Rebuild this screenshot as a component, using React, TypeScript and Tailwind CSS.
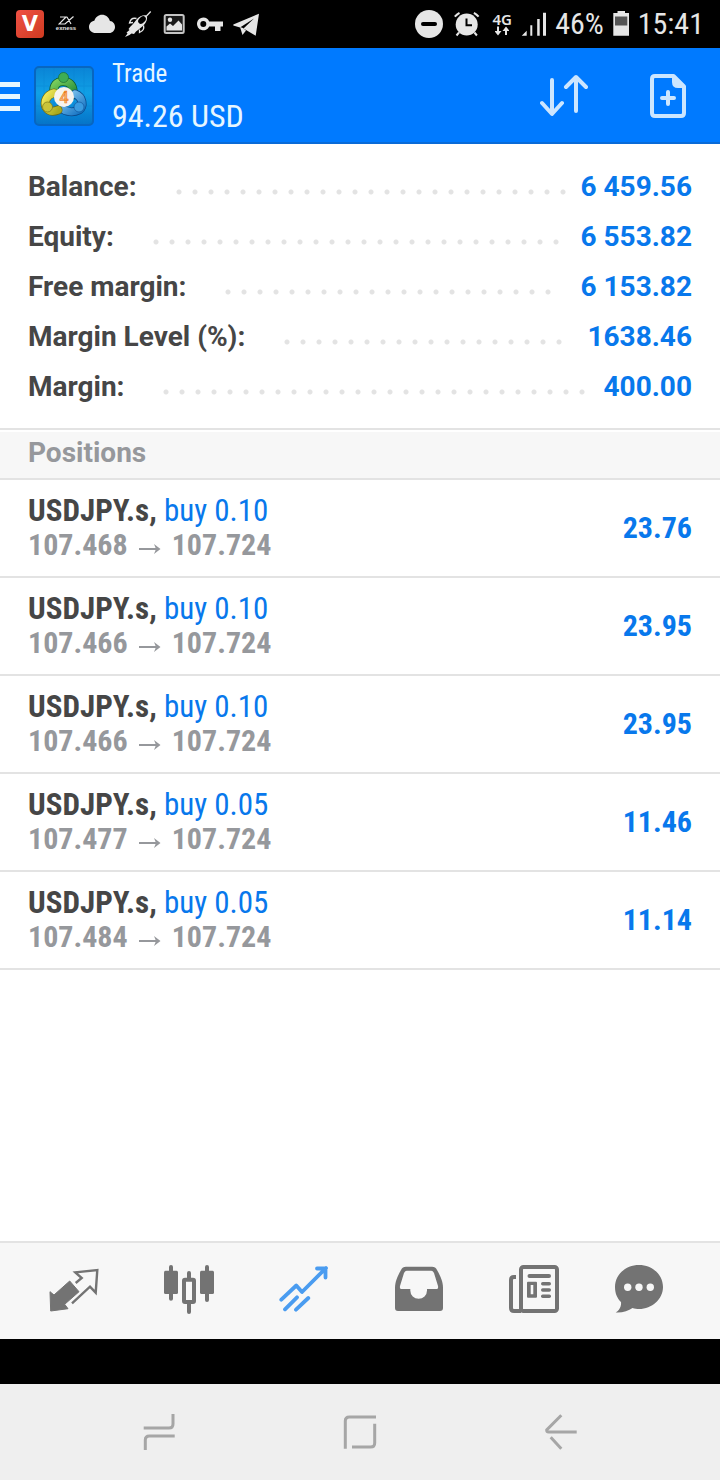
import type { ReactNode } from "react";

const summary = [
  { label: "Balance:", value: "6 459.56" },
  { label: "Equity:", value: "6 553.82" },
  { label: "Free margin:", value: "6 153.82" },
  { label: "Margin Level (%):", value: "1638.46" },
  { label: "Margin:", value: "400.00" },
];

const positions = [
  { symbol: "USDJPY.s", side: "buy 0.10", open: "107.468", current: "107.724", profit: "23.76" },
  { symbol: "USDJPY.s", side: "buy 0.10", open: "107.466", current: "107.724", profit: "23.95" },
  { symbol: "USDJPY.s", side: "buy 0.10", open: "107.466", current: "107.724", profit: "23.95" },
  { symbol: "USDJPY.s", side: "buy 0.05", open: "107.477", current: "107.724", profit: "11.46" },
  { symbol: "USDJPY.s", side: "buy 0.05", open: "107.484", current: "107.724", profit: "11.14" },
];

function StatusIcon({ width = 28, children }: { width?: number; children: ReactNode }) {
  return (
    <svg width={width} height="28" viewBox={`0 0 ${width} 28`} fill="#e6e6e6" className="shrink-0" aria-hidden="true">
      {children}
    </svg>
  );
}

function StatusBar() {
  return (
    <div className="flex h-12 items-center justify-between bg-black px-4 text-[#e6e6e6]">
      <div className="flex items-center gap-2">
        <StatusIcon>
          <defs>
            <linearGradient id="vred" x1="0" y1="0" x2="1" y2="1">
              <stop offset="0" stopColor="#ef5145" />
              <stop offset="1" stopColor="#cf3a20" />
            </linearGradient>
          </defs>
          <rect width="28" height="28" rx="4" fill="url(#vred)" />
          <text x="14" y="21" textAnchor="middle" fontSize="21" fontWeight="700" fontFamily="DejaVu Sans, sans-serif" fill="#fff">
            V
          </text>
        </StatusIcon>
        <div className="flex w-7 flex-col items-center">
          <svg width="16" height="9" viewBox="0 0 16 9" fill="none" stroke="#e6e6e6" strokeWidth="1.2" aria-hidden="true">
            <path d="M2 1H8L1 8H7L15.500 .5M9 1L13 8" />
          </svg>
          <span className="font-['Liberation_Sans',sans-serif] text-[6px] leading-[7px] font-bold">exness</span>
        </div>
        <StatusIcon>
          <path d="M7.500 23C4 23 1 20.500 1 17C1 13.800 3.300 11.300 6.300 10.800C7.500 7 10.500 4.700 14 4.700C17.800 4.700 21 7.200 21.900 11C25 11.300 27 13.800 27 17C27 20.300 24.500 23 21.200 23Z" />
        </StatusIcon>
        <StatusIcon>
          <path d="M26.700 1.500L22.500 6" stroke="#e6e6e6" strokeWidth="1.300" />
          <path d="M22.800 5.500C19.500 4.500 15.500 6 13 9L9 14L6.500 16.500L4.500 19L5.500 20L2.500 22.500L3.500 23.500L1 27L5.500 25L7.500 23.500L10 24L12 21.500L14 20L19.500 15.500C22.500 12.500 23.800 8.500 22.800 5.500Z" />
          <ellipse cx="18" cy="10" rx="4.400" ry="3" transform="rotate(-45 18 10)" fill="#000" />
          <path d="M12.500 8.500C8.500 7.500 6.500 9 5.500 13L9 12.500M19.500 15.500C20.500 19 19 21 15.500 22.500L15.500 19.500" fill="none" stroke="#e6e6e6" strokeWidth="1.300" />
        </StatusIcon>
        <StatusIcon>
          <rect x="4.700" y="5" width="19" height="18" rx="1.500" fill="#1a1a1a" stroke="#c4c4c4" strokeWidth="2" />
          <circle cx="10" cy="9.800" r="2.200" />
          <path d="M6.500 20.500V16.500L10 13.500L13 16L18.500 10.500L22 14.500V20.500Z" />
        </StatusIcon>
        <StatusIcon>
          <path
            fillRule="evenodd"
            d="M7.300 7.500A6.400 6.400 0 0 1 13.200 11.500H27V16.500H24.500V21H19V16.500H13.200A6.400 6.400 0 1 1 7.300 7.500ZM7.300 11A3 3 0 1 0 7.300 17A3 3 0 1 0 7.300 11Z"
          />
        </StatusIcon>
        <StatusIcon>
          <path d="M27 3.700L1.300 14.500L1.300 15.500L8 17.500L22 8.500L11.500 18.500L23.700 25.700Z" />
          <path d="M8 17L10.500 25L14 20.500L11 18Z" />
        </StatusIcon>
      </div>
      <div className="flex items-center gap-2">
        <StatusIcon>
          <circle cx="14" cy="14" r="14" />
          <rect x="6" y="12" width="16" height="4" rx="2" fill="#000" />
        </StatusIcon>
        <StatusIcon width={32}>
          <circle cx="15.700" cy="14.500" r="11" />
          <path d="M3.800 6.700A17 17 0 0 1 8.500 2.800M27.600 6.700A17 17 0 0 0 22.900 2.800M8 22.500L5.500 25.500M23.400 22.500L25.900 25.500" stroke="#e6e6e6" strokeWidth="2" />
          <path d="M15.500 8.500V15.300H21" fill="none" stroke="#000" strokeWidth="2" />
        </StatusIcon>
        <div className="flex w-[22px] flex-col items-center">
          <span className="font-['Noto_Sans',sans-serif] text-[15px] leading-[14px] font-semibold">4G</span>
          <svg width="14" height="10" viewBox="0 0 14 10" fill="#e6e6e6" aria-hidden="true">
            <path d="M2 .5H4V5H6.500L3 9.500L-.5 5H2ZM10 9H12V5H14.500L11 .5L7.500 5H10Z" />
          </svg>
        </div>
        <StatusIcon width={26}>
          <path d="M.7 25.700L5.700 20.700V25.700ZM9.300 15.300H11.300V25.700H9.300ZM16.200 9H18.700V25.700H16.200ZM22 2.700H25V25.700H22Z" />
        </StatusIcon>
        <span className="text-[30px] leading-9">46%</span>
        <StatusIcon width={18}>
          <path d="M5.500 1H13V3H17V25.700H1.300V3H5.500Z" />
          <rect x="3" y="6.500" width="12.300" height="9" fill="#555" />
        </StatusIcon>
        <span className="text-[30px] leading-9">15:41</span>
      </div>
    </div>
  );
}

function AppLogo() {
  return (
    <svg width="60" height="60" viewBox="0 0 60 60" className="shrink-0" role="img" aria-label="MetaTrader 4">
      <defs>
        <linearGradient id="tile" x1="0" y1="0" x2="0" y2="1">
          <stop offset="0" stopColor="#0a84d6" />
          <stop offset=".45" stopColor="#10a0e6" />
          <stop offset="1" stopColor="#0573c8" />
        </linearGradient>
        <linearGradient id="green" x1="0" y1="0" x2="1" y2="1">
          <stop offset="0" stopColor="#7ccf5c" />
          <stop offset="1" stopColor="#1f8a3a" />
        </linearGradient>
        <linearGradient id="yellow" x1="0" y1="0" x2="1" y2="1">
          <stop offset="0" stopColor="#f3ea5a" />
          <stop offset="1" stopColor="#a9a91e" />
        </linearGradient>
        <linearGradient id="blue" x1="0" y1="0" x2="1" y2="1">
          <stop offset="0" stopColor="#8fd0f5" />
          <stop offset="1" stopColor="#1674c4" />
        </linearGradient>
      </defs>
      <rect x="1" y="1" width="58" height="58" rx="4" fill="url(#tile)" stroke="#0866c0" strokeWidth="2" />
      <path d="M10 2V58M20 2V58M40 2V58M50 2V58M2 20H58M2 40H58" stroke="#0a7fd0" strokeWidth=".6" opacity=".5" />
      <g fill="none" strokeLinecap="round">
        <path d="M20 27C19 19 23 15.500 29 15.500C37 15.500 40 21 39 29" stroke="#0c5a2c" strokeWidth="9" />
        <path d="M20 27C19 19 23 15.500 29 15.500C37 15.500 40 21 39 29" stroke="url(#green)" strokeWidth="7.500" />
        <path d="M41 28C49 31 50 40 45 44C39 47 32 46 27 42" stroke="#0b4a8c" strokeWidth="9" />
        <path d="M41 28C49 31 50 40 45 44C39 47 32 46 27 42" stroke="url(#blue)" strokeWidth="7.500" />
        <path d="M20 27C12 29 10 36 12 41C15 46 19 46 24 44" stroke="#6d6a10" strokeWidth="9" />
        <path d="M20 27C12 29 10 36 12 41C15 46 19 46 24 44" stroke="url(#yellow)" strokeWidth="7.500" />
      </g>
      <circle cx="29.500" cy="11.500" r="5" fill="#3fae55" stroke="#1a6b35" strokeWidth=".7" />
      <circle cx="13.500" cy="41" r="5" fill="#c9c43a" stroke="#77751a" strokeWidth=".7" />
      <circle cx="45" cy="41" r="5" fill="#3a9be0" stroke="#14589c" strokeWidth=".7" />
      <circle cx="30" cy="31" r="10" fill="#f7f3ee" />
      <text x="30" y="37" textAnchor="middle" fontSize="16" fontWeight="500" fontFamily="Roboto, sans-serif" fill="#fbb878" stroke="#ec7a1c" strokeWidth=".6">
        4
      </text>
    </svg>
  );
}

function Header() {
  return (
    <header className="flex h-24 items-center border-b-2 border-[#0a6bd8] bg-[#007aff] pt-[2px] pr-[34px] text-[#e6f6ff]">
      <button type="button" aria-label="Open menu" className="flex w-5 flex-col gap-[7px]">
        <span className="h-[5px] bg-[#e6f6ff]" />
        <span className="h-[5px] bg-[#e6f6ff]" />
        <span className="h-[5px] bg-[#e6f6ff]" />
      </button>
      <div className="ml-[14px] flex flex-1 items-center gap-[18px]">
        <AppLogo />
        <h1 className="pb-[2px] font-normal">
          <span className="block text-[25px] leading-[42px]">Trade</span>
          <span className="block text-[32px] leading-[42px]">94.26 USD</span>
        </h1>
      </div>
      <div className="flex items-center gap-[62px]">
        <button type="button" aria-label="Sort positions">
          <svg width="48" height="44" viewBox="0 0 48 44" fill="none" stroke="#cce6ff" strokeWidth="4" strokeLinecap="round" strokeLinejoin="round">
            <path d="M12 6V39M2 29L12 40L22 29M36 37V4M26 13L36 3L46 13" />
          </svg>
        </button>
        <button type="button" aria-label="New order">
          <svg width="36" height="44" viewBox="0 0 36 44" fill="none" stroke="#cce6ff" strokeWidth="4" strokeLinejoin="round">
            <path d="M5 2H23.500L34 12.500V39Q34 42 31 42H5Q2 42 2 39V5Q2 2 5 2Z" />
            <path d="M22 1H24L35 12V14H28Q22 14 22 8Z" fill="#cce6ff" stroke="none" />
            <path d="M18 18V30M12 24H24" strokeLinecap="round" />
          </svg>
        </button>
      </div>
    </header>
  );
}

function TabButton({ label, active = false, children }: { label: string; active?: boolean; children: ReactNode }) {
  return (
    <button
      type="button"
      aria-label={label}
      aria-current={active ? "page" : undefined}
      className={active ? "flex items-center justify-center text-[#4a9cf0]" : "flex items-center justify-center text-[#737373]"}
    >
      <svg width="52" height="52" viewBox="0 0 52 52" fill="currentColor">
        {children}
      </svg>
    </button>
  );
}

function TabBar() {
  return (
    <nav
      aria-label="Sections"
      className="grid h-[98px] grid-cols-[115fr_115fr_115fr_115fr_115fr_95fr] border-t-2 border-[#e3e3e3] bg-[#f7f7f7] pr-[34px] pl-4"
    >
      <TabButton label="Quotes">
        <path d="M2 26.700L6 30L21.700 16L31 26.700L16.700 39.300L20 43.700L2.700 46Z" stroke="currentColor" strokeLinejoin="round" />
        <path d="M24 38.300L42 21.700L47.700 27.700L49.300 5L27.300 7.300L33.700 13L27.700 18" fill="none" stroke="currentColor" strokeWidth="2.400" />
      </TabButton>
      <TabButton label="Charts">
        <path d="M8 2V33.700M44 2V35M26 8V14M26 38V47" stroke="currentColor" strokeWidth="4" strokeLinecap="round" />
        <rect x="1" y="5.700" width="14" height="23.300" rx="1.500" />
        <rect x="37" y="5.700" width="14" height="23.300" rx="1.500" />
        <rect x="21" y="14.700" width="10" height="22.300" rx="1" fill="none" stroke="currentColor" strokeWidth="4" />
      </TabButton>
      <TabButton label="Trade" active>
        <path
          d="M3.300 34.700L18.300 20.500L24 27L48 3M39 3.500H47.500V12.500M19 32.300L7 44.300M30.300 33L18 44.700"
          fill="none"
          stroke="currentColor"
          strokeWidth="3.800"
          strokeLinecap="round"
          strokeLinejoin="round"
        />
      </TabButton>
      <TabButton label="History">
        <path
          fillRule="evenodd"
          d="M13 1.700H39Q42.500 1.700 44 5C48 12 50 17 50 23V43Q50 46 47 46H5Q2 46 2 43V23C2 17 4 12 8 5Q9.500 1.700 13 1.700ZM14 5.700Q12 5.700 11 8L7 21Q6.500 24 8 24H17.300V25.500A8.350 8.350 0 0 0 34 25.500V24H44Q45.500 24 45 21L41 8Q40 5.700 38 5.700Z"
        />
      </TabButton>
      <TabButton label="News">
        <g fill="none" stroke="currentColor" strokeWidth="4">
          <rect x="13" y="2" width="36" height="44" rx="2.500" />
          <path d="M8 12H6Q3 12 3 15V43Q3 46 6 46H13" />
        </g>
        <rect x="19.500" y="9" width="23.500" height="4" rx="2" />
        <path fillRule="evenodd" d="M20 16.700H28Q29 16.700 29 17.700V31.700Q29 32.700 28 32.700H20Q19 32.700 19 31.700V17.700Q19 16.700 20 16.700ZM22.700 20V29.300H25.300V20Z" />
        <rect x="33" y="17" width="10" height="3.500" rx="1.700" />
        <rect x="33" y="23.200" width="10" height="3.500" rx="1.700" />
        <rect x="33" y="29.400" width="10" height="3.500" rx="1.700" />
      </TabButton>
      <TabButton label="Messages">
        <path d="M26 0C13 0 2 9.500 2 22C2 29 4.500 33.500 8 37C8.500 41.500 6 45.500 2.700 47.500C9 48 15.500 46 19.500 43C21.500 43.700 24 44 26 44C39 44 50 34 50 22C50 9.500 39 0 26 0Z" />
        <g fill="#f7f7f7">
          <circle cx="14.700" cy="22.300" r="3.700" />
          <circle cx="26" cy="22.300" r="3.700" />
          <circle cx="37.300" cy="22.300" r="3.700" />
        </g>
      </TabButton>
    </nav>
  );
}

function SystemButton({ label, d }: { label: string; d: string }) {
  return (
    <button type="button" aria-label={label} className="flex items-center justify-center">
      <svg width="48" height="48" viewBox="0 0 48 48" fill="none" stroke="#a6a6a6" strokeWidth="3">
        <path d={d} />
      </svg>
    </button>
  );
}

export default function App() {
  return (
    <div className="flex min-h-screen flex-col bg-white font-['Roboto_Condensed',Roboto,sans-serif]">
      <StatusBar />
      <Header />
      <main className="flex-1">
        <dl className="border-b-2 border-[#e3e3e3] px-7 pt-[18px] pb-4 font-[Roboto,sans-serif] text-[28px] leading-[50px] font-bold">
          {summary.map((row) => (
            <div key={row.label} className="flex items-center">
              <dt className="text-[#464646]">{row.label}</dt>
              <dd className="flex flex-1 items-center text-[#0878ec]">
                <span className="mt-[9px] mr-[9px] ml-[34px] flex-1" aria-hidden="true">
                  <span className="block h-4 w-[round(down,100%,16px)] bg-[radial-gradient(circle,#e3e3e3_2px,transparent_3px)] bg-[length:16px_16px]" />
                </span>
                {row.value}
              </dd>
            </div>
          ))}
        </dl>
        <section>
          <h2 className="mt-[2px] h-12 border-b-2 border-[#e3e3e3] bg-[#f7f7f7] px-7 font-[Roboto,sans-serif] text-[28px] leading-[42px] font-bold text-[#96989c]">
            Positions
          </h2>
          <ul>
            {positions.map((p, i) => (
              <li key={i} className="flex items-center justify-between border-b-2 border-[#e3e3e3] px-7 py-[14px] text-[30px] leading-[34px] font-bold">
                <div>
                  <p className="text-[31px] text-[#464646]">
                    {p.symbol}, <span className="font-normal text-[#0878ec]">{p.side}</span>
                  </p>
                  <p className="flex items-center text-[#96989c]">
                    {p.open}
                    <svg width="22" height="12" viewBox="0 0 22 12" className="mx-[11px] mt-2" fill="none" stroke="currentColor" strokeWidth="2" role="img" aria-label="to">
                      <path d="M0 6H20" />
                      <path d="M15 1L21.500 6L15 11L17 6Z" fill="currentColor" stroke="none" />
                    </svg>
                    {p.current}
                  </p>
                </div>
                <span className="text-[#0878ec]">{p.profit}</span>
              </li>
            ))}
          </ul>
        </section>
      </main>
      <TabBar />
      <div className="h-[45px] bg-black" />
      <div className="grid h-24 grid-cols-3 bg-[#efefef] px-[58px]">
        <SystemButton label="Recent apps" d="M8.700 20H34Q38 20 38 16V6M39.700 28H14.300Q10.300 28 10.300 32V42" />
        <SystemButton label="Home" d="M9.300 40.700V13Q9.300 9 13.300 9H40M38.700 15.700V35Q38.700 39 34.700 39H16" />
        <SystemButton label="Back" d="M24.300 7.300L9.700 22Q9.500 24 11.500 24H39.700M13.700 29.300L24.300 40.700" />
      </div>
    </div>
  );
}
